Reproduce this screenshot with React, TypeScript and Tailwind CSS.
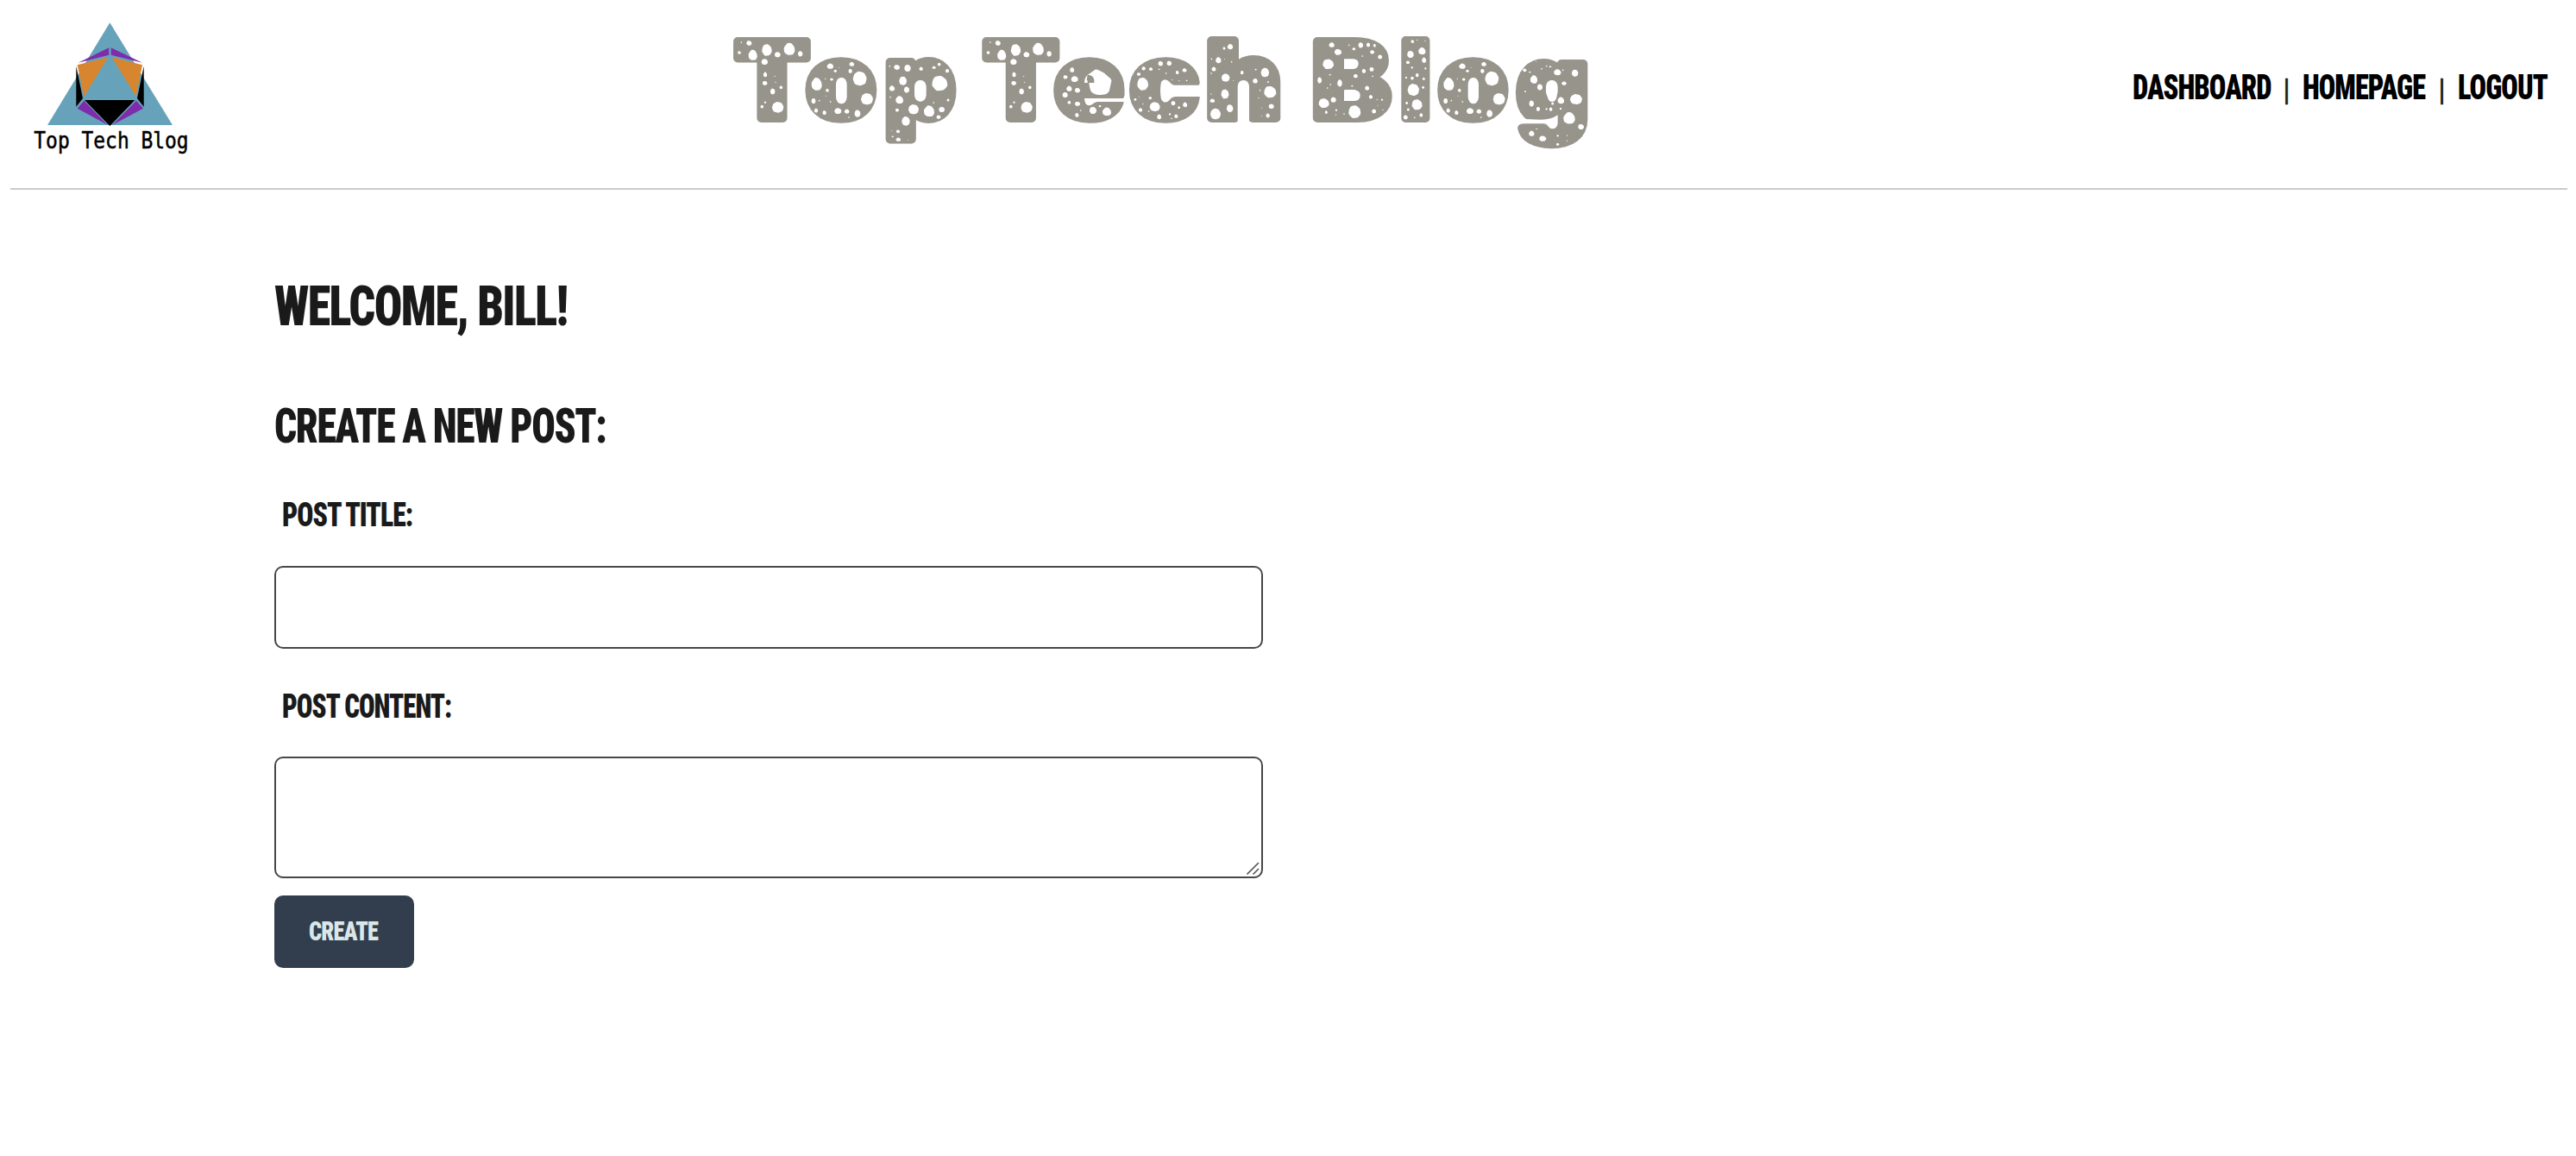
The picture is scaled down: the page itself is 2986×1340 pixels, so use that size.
type Hole = [number, number, number, number];
type Glyph = { ch: string; left: number; width: number; gl: number; gw: number; sy?: number; dy?: number };

/* Bounding boxes of the wordmark letters, with each glyph's own side bearing and width per 100px. */
const glyphs: Glyph[] = [
  { ch: 'T', left: 849.2, width: 90.6, gl: 2, gw: 64 },
  { ch: 'o', left: 933.7, width: 83.2, gl: 3, gw: 57, sy: 0.97 },
  { ch: 'p', left: 1025.5, width: 83.4, gl: 4, gw: 58, sy: 0.975 },
  { ch: 'T', left: 1137.6, width: 90.8, gl: 2, gw: 64 },
  { ch: 'e', left: 1221.5, width: 82, gl: 3, gw: 55, sy: 0.97 },
  { ch: 'c', left: 1309.3, width: 82, gl: 3, gw: 55, sy: 0.97 },
  { ch: 'h', left: 1398.4, width: 85.4, gl: 4, gw: 56, sy: 1.01 },
  { ch: 'B', left: 1521.4, width: 92.6, gl: 4, gw: 61 },
  { ch: 'l', left: 1623, width: 35, gl: 4, gw: 21, sy: 1.015 },
  { ch: 'o', left: 1666.4, width: 82.8, gl: 3, gw: 57, sy: 0.97 },
  { ch: 'g', left: 1757, width: 83.3, gl: 3, gw: 57, dy: 4 },
];

const T: Hole[] = [[88,87,2,2],[115,90,9,8],[81,123,5,5],[128,131,15,18],[177,114,17,20],[214,130,10,9],[255,110,19,21],[293,127,8,9],[169,155,11,10],[171,199,6,8],[170,229,8,7],[204,205,2,1],[207,226,2,1],[226,244,5,5],[197,258,8,10],[171,296,3,3],[160,311,5,5],[215,313,20,19]];
const O: Hole[] = [[397,170,11,9],[415,187,5,4],[427,175,1,1],[472,163,8,7],[467,187,6,7],[500,213,24,25],[350,232,18,22],[380,214,2,1],[402,216,5,4],[387,254,5,5],[382,274,1,1],[339,291,7,9],[359,290,2,2],[398,294,2,2],[525,284,21,20],[348,324,6,7],[377,332,6,7],[424,326,12,10],[455,327,8,7],[492,335,10,12],[462,348,2,2]];
const P: Hole[] = [[604,170,2,2],[629,174,10,8],[666,177,11,12],[713,179,6,6],[758,175,6,4],[776,164,5,5],[804,186,6,6],[778,230,27,26],[650,221,13,15],[612,247,9,9],[663,252,9,10],[606,278,2,2],[638,287,13,13],[630,323,6,5],[687,320,18,17],[741,326,18,19],[757,297,2,2],[785,321,10,9],[807,288,4,4],[774,347,7,6],[660,361,14,16],[611,394,1,1],[633,397,6,5],[614,415,3,2],[634,425,8,6],[668,427,1,1]];
const EC: Hole[] = [[98,153,7,8],[75,178,7,6],[107,185,12,10],[88,218,9,9],[117,224,9,8],[74,240,9,9],[88,266,5,5],[117,271,9,7],[128,294,2,2],[115,310,6,7],[171,294,12,12],[195,279,4,3],[219,298,15,14],[330,168,6,5],[347,148,6,6],[372,150,6,5],[406,131,8,8],[436,130,8,8],[401,151,2,2],[425,165,2,2],[464,162,5,6],[489,154,7,6],[446,188,2,1],[470,191,2,1],[497,190,2,2],[344,202,19,22],[318,256,4,4],[331,247,1,1],[370,251,5,4],[345,271,2,1],[336,292,6,6],[365,297,2,2],[386,281,18,16],[401,316,7,8],[450,269,7,7],[470,284,4,4],[491,274,7,8],[438,307,3,3],[444,322,3,1],[460,314,6,6]];
const HB: Hole[] = [[258,102,9,9],[237,108,4,4],[193,145,2,2],[217,149,9,10],[239,146,1,1],[263,155,2,2],[201,180,7,7],[192,195,2,2],[242,210,14,14],[269,220,1,1],[240,267,13,16],[192,267,2,1],[196,290,8,6],[257,317,11,13],[207,336,18,19],[299,192,5,6],[347,182,3,2],[379,192,14,16],[345,221,8,8],[390,225,3,2],[362,254,2,2],[357,281,2,1],[397,260,21,20],[401,310,9,8],[367,316,1,1],[389,342,6,7],[367,343,1,1],
[611,96,9,8],[633,121,12,10],[671,97,2,2],[688,110,5,4],[712,97,8,9],[738,96,6,7],[760,98,4,5],[752,121,7,6],[779,138,7,7],[718,135,2,2],[599,163,19,17],[605,200,3,2],[694,204,7,6],[723,187,6,7],[750,181,7,7],[753,205,2,2],[569,219,7,10],[639,229,8,12],[596,246,2,2],[607,234,2,2],[682,239,3,2],[734,246,7,7],[747,277,6,6],[769,286,2,1],[786,287,3,3],[584,299,18,16],[617,287,9,9],[592,330,4,5],[627,323,3,3],[625,339,1,2],[654,336,2,2],[691,329,21,22],[758,327,7,7],[771,307,1,1],[789,322,2,1]];
const LG: Hole[] = [[892,84,5,5],[908,79,2,1],[936,82,2,1],[925,117,12,12],[885,129,11,12],[876,157,6,5],[932,149,7,9],[890,175,3,3],[937,178,3,3],[908,201,5,6],[891,212,5,5],[870,210,3,3],[931,214,4,4],[929,244,4,4],[895,252,20,21],[872,298,4,4],[908,304,18,18],[877,321,4,4],[922,340,5,6],[868,348,7,7],[899,349,2,2],
[1322,154,1,1],[1282,184,6,5],[1300,191,3,2],[1341,179,2,2],[1358,170,2,2],[1371,172,4,2],[1396,191,12,10],[1415,184,2,2],[1457,194,11,12],[1314,216,12,14],[1335,243,9,10],[1419,230,8,6],[1284,258,3,2],[1306,300,8,10],[1329,319,6,7],[1358,319,3,3],[1373,320,5,6],[1379,300,4,4],[1408,289,11,11],[1407,318,3,3],[1461,285,21,18],[1437,350,20,20],[1478,381,10,9],[1324,388,3,1],[1306,404,9,9],[1345,422,12,9],[1397,412,3,3],[1430,411,1,2],[1430,430,1,2],[1397,442,5,4]];

const shapes = [
  [[-0.3,-1],[0.4,-0.9],[0.9,-0.3],[1,0.4],[0.6,0.95],[-0.3,1],[-0.9,0.6],[-1,-0.2]],
  [[-0.6,-0.9],[0.2,-1],[0.85,-0.5],[1,0.3],[0.5,0.9],[-0.4,1],[-1,0.3],[-0.9,-0.4]],
  [[-0.2,-1],[0.6,-0.8],[1,-0.1],[0.8,0.7],[0.1,1],[-0.7,0.8],[-1,0.1],[-0.8,-0.6]],
];

/* One crater: an irregular octagon whose corners are softened near each vertex. */
function blob([cx, cy, rx, ry]: Hole, i: number) {
  const pts = shapes[i % 3].map(([x, y]) => [cx + x * (rx + 0.5), cy + y * (ry + 0.5)]);
  const mid = (a: number[], b: number[]) => [(a[0] + b[0]) / 2, (a[1] + b[1]) / 2];
  let d = '';
  pts.forEach((p, n) => {
    const prev = pts[(n + pts.length - 1) % pts.length];
    const next = pts[(n + 1) % pts.length];
    const a = mid(mid(prev, p), p);
    const b = mid(p, mid(p, next));
    d += `${n ? 'L' : 'M'}${a[0].toFixed(1)} ${a[1].toFixed(1)}Q${p[0].toFixed(1)} ${p[1].toFixed(1)} ${b[0].toFixed(1)} ${b[1].toFixed(1)}`;
  });
  return d + 'Z';
}

const Holes = ({ list, x, y }: { list: Hole[]; x: number; y: number }) => (
  <path transform={`translate(${x} ${y}) scale(.33333)`} d={list.map(blob).join('')} fill="#fff" />
);

function Wordmark() {
  const k = 1.224;
  return (
    <svg className="h-[210px] w-[1010px] overflow-visible" viewBox="840 0 1010 210" role="img" aria-label="Top Tech Blog">
      <g fill="#97958b" stroke="#97958b" strokeWidth="10" strokeLinejoin="round" fontFamily="Inter, sans-serif" fontWeight="900" fontSize="122.4">
        {glyphs.map((g, i) => {
          const sx = (g.width - 10) / (g.gw * k);
          return (
            <text key={i} transform={`translate(${g.left + 5 - g.gl * k * sx} ${137 + (g.dy ?? 0)}) scale(${sx} ${g.sy ?? 1})`}>
              {g.ch}
            </text>
          );
        })}
      </g>
      <Holes list={T} x={830} y={20} />
      <Holes list={T} x={1118.5} y={20} />
      <Holes list={O} x={830} y={20} />
      <Holes list={O} x={1562.7} y={20} />
      <Holes list={P} x={830} y={20} />
      <Holes list={EC} x={1210} y={30} />
      <Holes list={HB} x={1340} y={20} />
      <Holes list={LG} x={1340} y={20} />
      {/* counters of o and p */}
      <g transform="translate(830 20) scale(.33333)" fill="#fff">
        <rect x="417" y="210" width="38" height="91" rx="18" ry="24" />
        <rect x="690" y="219" width="41" height="74" rx="19" ry="24" />
      </g>
      {/* openings of e and c */}
      <g transform="translate(1210 30) scale(.33333)">
        <path fill="#97958b" d="M250 225H279V246Q279 252 273 252H250ZM250 264H267Q274 264 273 271Q270 287 262 298H250Z" />
        <path fill="#fff" d="M141 252H282V256L276 264H186Q177 265 172 270Q164 277 156 277Q142 275 141 252Z" />
        <path fill="#fff" d="M152 171L178 152Q184 150 190 154L208 163L229 181Q236 186 235 192L228 224Q226 232 217 237Q200 242 185 239Q168 236 163 226Q158 212 157 198H141Q141 180 152 171Z" />
        <path fill="#97958b" d="M152 171Q172 170 175 188V198H152V192L149 186Z" />
        <path fill="#fff" d="M437 195Q445 206 455 206H545V246H460Q445 246 437 258Q420 275 408 255Q402 225 408 195Q420 178 437 195Z" />
      </g>
      {/* openings of h, B, o and g */}
      <g transform="translate(1340 20) scale(.33333)" fill="#fff">
        <path d="M284 367V240Q286 219 304 219T324 240V367Z" />
        <path d="M654 145H685Q704 146 704 162T685 180H654ZM654 253H690Q710 255 710 272T690 291H654Z" />
        <rect x="1085" y="210" width="37" height="91" rx="18" ry="24" />
        <rect x="1356" y="219" width="41" height="63" rx="19" ry="24" />
        <path d="M1250 351Q1290 356 1340 356Q1375 356 1397 340V370Q1394 388 1378 388Q1368 388 1362 376Q1357 370 1348 370H1250Z" />
      </g>
    </svg>
  );
}

function Logo() {
  return (
    <svg className="ml-5 mt-5 h-40 w-[210px]" viewBox="96 60 630 480" role="img" aria-label="Top Tech Blog logo">
      <path fill="#66a3bb" d="M382 79L600 435H165Z" />
      <g fill="#7e2cab">
        <path d="M272 218L379 166V191Z" />
        <path d="M495 218L386 166V191Z" />
        <path d="M269 377L292 350L374 434Z" />
        <path d="M498 377L474 350L391 434Z" />
      </g>
      <g fill="#d7862f">
        <path d="M269 226L376 199L292 336Z" />
        <path d="M495 226L389 199L473 336Z" />
      </g>
      <path d="M265 230L288 342L265 371Z" />
      <path d="M500 230L477 342L500 371Z" />
      <path d="M294 348H469L382 438Z" />
      <text x="118" y="516" textLength="538" lengthAdjust="spacingAndGlyphs" fontFamily="DejaVu Sans Mono, monospace" fontSize="78" stroke="#000" strokeWidth="1.5">
        Top Tech Blog
      </text>
    </svg>
  );
}

const condensed = "font-['Roboto',sans-serif] font-black [font-stretch:75%] tracking-[-0.03em] inline-block origin-left whitespace-nowrap leading-none";
const bar = "w-[35px] pt-1.5 pr-[2px] text-center font-['Liberation_Sans',sans-serif] text-[31px] leading-none text-[#1a1a1a] [-webkit-text-stroke:0.4px_#1a1a1a]";

export default function App() {
  return (
    <div className="min-h-[1340px] bg-white px-3 text-[#1a1a1a]">
      <header className="mr-[-2px] flex h-[220px] items-start border-b-2 border-[#cbcbcb]">
        <Logo />
        <div className="flex-1 pl-[598px]">
          <Wordmark />
        </div>
        <nav className="mt-[80px] mr-[21px] flex h-[40px] shrink-0 items-center text-[40px] text-black">
          <a className="w-[162px]"><span className={`${condensed} scale-x-[0.812]`}>DASHBOARD</span></a>
          <span className={bar}>|</span>
          <a className="w-[145px]"><span className={`${condensed} scale-x-[0.81]`}>HOMEPAGE</span></a>
          <span className={bar}>|</span>
          <a className="w-[106px]"><span className={`${condensed} scale-x-[0.811]`}>LOGOUT</span></a>
        </nav>
      </header>
      <main className="ml-[306px] flex w-[1146px] flex-col items-start pt-[101px]">
        <h1 className="h-[64px] text-[64px] leading-none"><span className={`${condensed} scale-x-[0.848]`}>WELCOME, BILL!</span></h1>
        <h2 className="mt-[78px] h-[56px] text-[56px] leading-none"><span className={`${condensed} scale-x-[0.818]`}>CREATE A NEW POST:</span></h2>
        <form className="flex w-full flex-col items-start">
          <label className="mt-[57px] ml-[9px] h-[38px] text-[38px] leading-none"><span className={`${condensed} scale-x-[0.835]`}>POST TITLE:</span></label>
          <input className="mt-[42px] h-[96px] w-full rounded-[10px] border-2 border-[#474747] px-4 text-[32px]" />
          <label className="mt-[46px] ml-[9px] h-[38px] text-[38px] leading-none"><span className={`${condensed} scale-x-[0.813]`}>POST CONTENT:</span></label>
          <div className="relative mt-[41px] h-[141px] w-full">
            <textarea className="block h-full w-full resize-none rounded-[10px] border-2 border-[#474747] px-4 text-[32px]" />
            <svg className="absolute right-[3px] bottom-[3px] size-4" viewBox="0 0 16 16" stroke="#555" strokeWidth="1.6">
              <path d="M.5 14.5L14 1M7.5 14.5L14 8" />
            </svg>
          </div>
          <button type="button" className="mt-5 h-[84px] w-[162px] rounded-[10px] bg-[#323e4e] pb-1 pl-10 text-left text-[32px] text-[#dbe7e7]"><span className={`${condensed} scale-x-[0.825]`}>CREATE</span></button>
        </form>
      </main>
    </div>
  );
}
